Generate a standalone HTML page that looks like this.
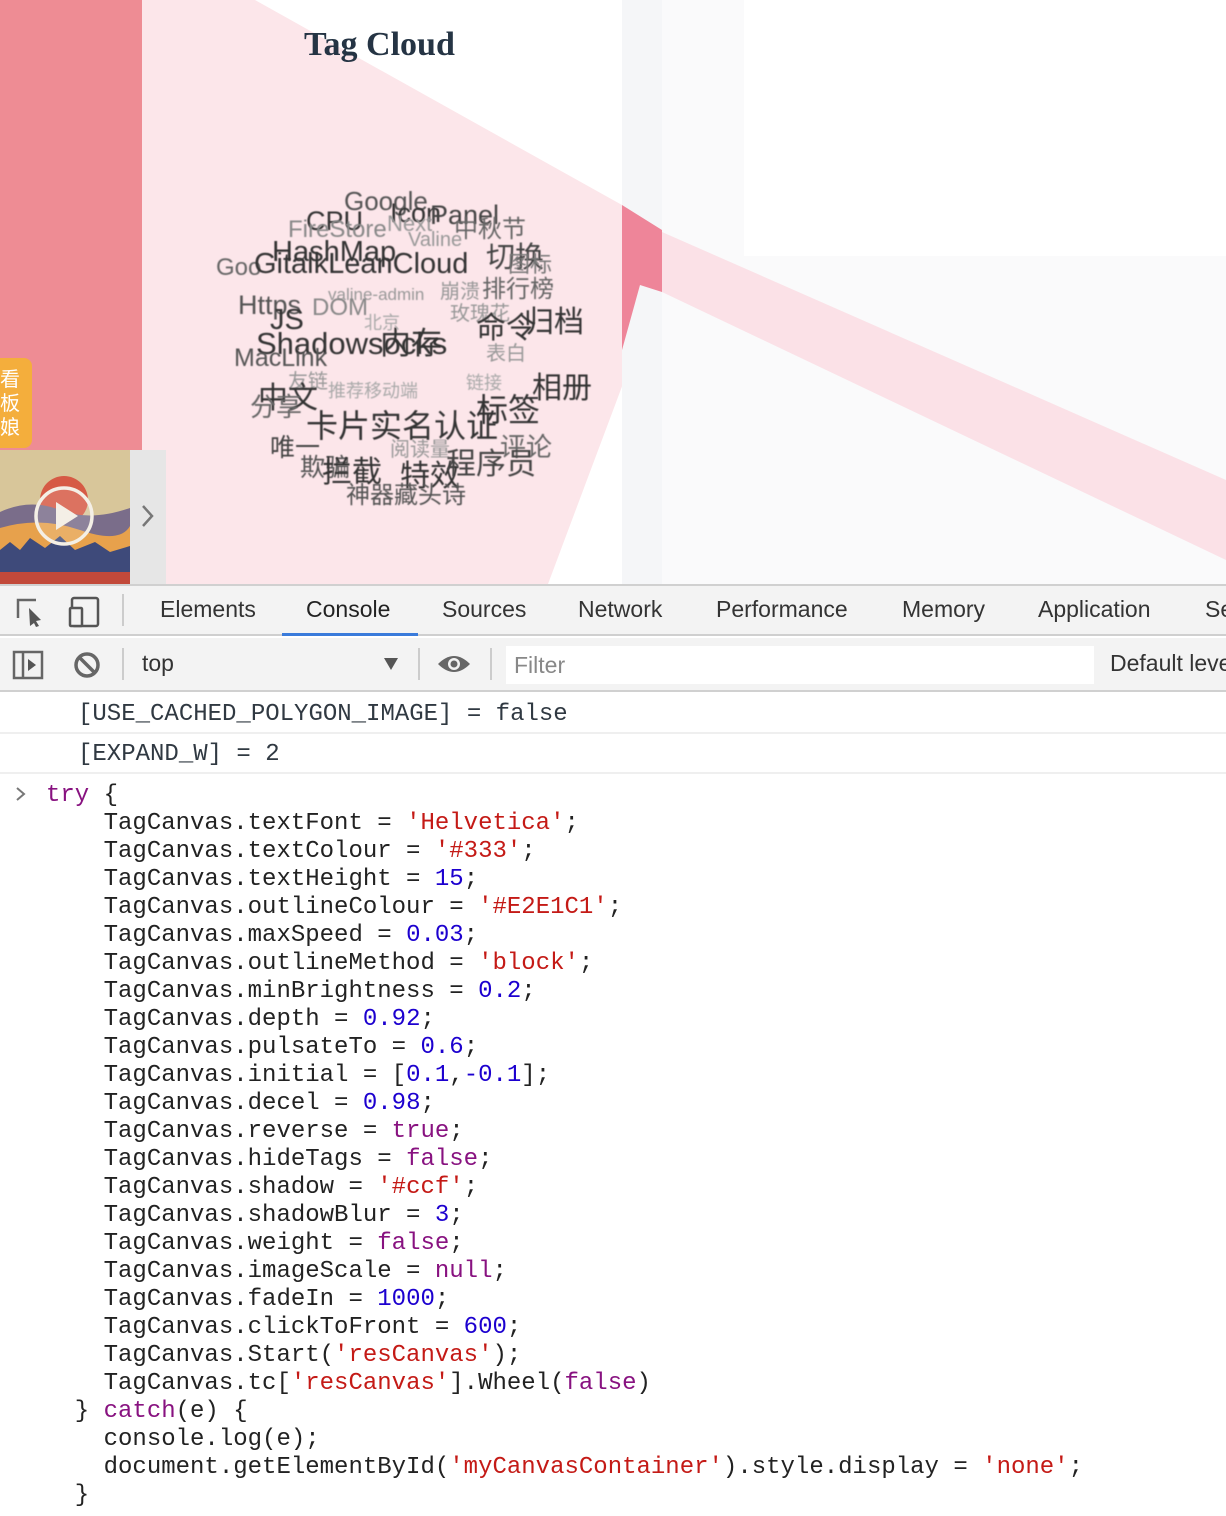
<!DOCTYPE html>
<html><head><meta charset="utf-8">
<style>
*{margin:0;padding:0;box-sizing:border-box}
body{width:1226px;height:1516px;overflow:hidden;background:#fff;position:relative;font-family:"Liberation Sans","Noto Sans CJK SC",sans-serif}
.abs{position:absolute;white-space:nowrap}
.tc span{position:absolute;white-space:nowrap;color:#333;filter:blur(0.6px);font-family:"Liberation Sans","Noto Sans CJK SC",sans-serif;line-height:1}
.tabs{top:584px;left:0;width:1226px;height:52px;background:#f3f3f3;border-top:2px solid #d0d0d0;border-bottom:2px solid #cfcfcf}
.tab{position:absolute;top:10px;font-size:23px;color:#333}
.bar2{top:638px;left:0;width:1226px;height:54px;background:#f3f3f3;border-bottom:2px solid #d0d0d0}
.mono{font-family:"Liberation Mono","DejaVu Sans Mono",monospace;font-size:24px;color:#222;white-space:pre}
.code{top:782px;left:46px;line-height:28px}
.k{color:#881280}.s{color:#c41a16}.n{color:#1c00cf}
</style></head><body>
<svg class="abs" style="left:0;top:0" width="1226" height="584">
<rect x="0" y="0" width="142" height="450" fill="#ee8c94"/>
<rect x="142" y="0" width="480" height="584" fill="#fff"/>
<polygon points="255,0 622,205 660,285 548,584 142,584 142,0" fill="#fce6ea"/>
<rect x="622" y="0" width="40" height="584" fill="#f5f6f8"/>
<rect x="662" y="0" width="564" height="584" fill="#fafafb"/>
<rect x="744" y="0" width="482" height="256" fill="#fff"/>
<polygon points="662,232 1226,480 1226,560 662,292" fill="#fbe1e7"/>
<polygon points="622,205 662,230 662,292 640,285 622,350" fill="#ee8599"/>
</svg>
<div class="abs" style="left:304px;top:26px;font-family:'Liberation Serif',serif;font-weight:bold;font-size:34px;color:#253444">Tag Cloud</div>
<div class="abs" style="left:0;top:358px;width:32px;height:90px;background:#f4ae3c;border-radius:0 8px 8px 0;color:#fff;font-size:20px;line-height:24px;padding-top:8px;white-space:normal;font-family:'Noto Sans CJK SC',sans-serif">看<br>板<br>娘</div>
<svg class="abs" style="left:0;top:450px" width="166" height="134">
<rect x="0" y="0" width="130" height="134" fill="#d8c69a"/>
<circle cx="64" cy="50" r="24" fill="#d65a45"/>
<path d="M0 62 Q30 48 60 60 T130 58 V134 H0Z" fill="#7a6d8a"/>
<path d="M0 78 Q40 66 80 80 T130 76 V134 H0Z" fill="#e7a14c"/>
<path d="M0 100 L10 92 L20 100 L30 88 L45 98 L60 86 L75 100 L95 92 L110 102 L130 96 V134 H0Z" fill="#3e4a7a"/>
<rect x="0" y="122" width="130" height="12" fill="#c2493a"/>
<circle cx="64" cy="66" r="28" fill="rgba(255,255,255,0.15)" stroke="#f4efe6" stroke-width="3.5"/>
<polygon points="56,52 56,80 78,66" fill="#f4efe6"/>
<rect x="130" y="0" width="36" height="134" fill="#e6e6e6"/>
<path d="M143 56 L152 66 L143 76" stroke="#777" stroke-width="2.5" fill="none"/>
</svg>
<div class="tc">
<span style="left:344px;top:188px;font-size:26px;color:#555">Google</span>
<span style="left:306px;top:208px;font-size:27px">CPU</span>
<span style="left:390px;top:200px;font-size:27px">Icon</span>
<span style="left:430px;top:202px;font-size:27px;color:#444">Panel</span>
<span style="left:288px;top:218px;font-size:24px;color:#888">FireStore</span>
<span style="left:387px;top:213px;font-size:22px;color:#999">Next</span>
<span style="left:408px;top:230px;font-size:20px;color:#999">Valine</span>
<span style="left:454px;top:218px;font-size:24px;color:#666">中秋节</span>
<span style="left:272px;top:238px;font-size:29px">HashMap</span>
<span style="left:216px;top:256px;font-size:24px;color:#666">Goo</span>
<span style="left:254px;top:250px;font-size:29px">GitalkLeanCloud</span>
<span style="left:486px;top:244px;font-size:29px;color:#444">切换</span>
<span style="left:508px;top:254px;font-size:22px;color:#777">图标</span>
<span style="left:328px;top:286px;font-size:17px;color:#999">valine-admin</span>
<span style="left:440px;top:282px;font-size:20px;color:#999">崩溃</span>
<span style="left:482px;top:278px;font-size:24px;color:#666">排行榜</span>
<span style="left:238px;top:292px;font-size:27px;color:#555">Https</span>
<span style="left:270px;top:306px;font-size:29px">JS</span>
<span style="left:312px;top:296px;font-size:24px;color:#888">DOM</span>
<span style="left:450px;top:304px;font-size:20px;color:#999">玫瑰花</span>
<span style="left:476px;top:314px;font-size:30px">命令</span>
<span style="left:524px;top:308px;font-size:30px">归档</span>
<span style="left:256px;top:328px;font-size:31px">Shadowsocks</span>
<span style="left:380px;top:328px;font-size:31px">内存</span>
<span style="left:364px;top:314px;font-size:18px;color:#aaa">北京</span>
<span style="left:234px;top:346px;font-size:25px;color:#555">MacLink</span>
<span style="left:486px;top:344px;font-size:20px;color:#999">表白</span>
<span style="left:288px;top:372px;font-size:20px;color:#999">友链</span>
<span style="left:328px;top:382px;font-size:18px;color:#aaa">推荐移动端</span>
<span style="left:466px;top:374px;font-size:18px;color:#aaa">链接</span>
<span style="left:532px;top:374px;font-size:30px">相册</span>
<span style="left:258px;top:384px;font-size:30px">中文</span>
<span style="left:250px;top:394px;font-size:26px;color:#666">分享</span>
<span style="left:476px;top:394px;font-size:32px">标签</span>
<span style="left:306px;top:410px;font-size:32px">卡片实名认证</span>
<span style="left:270px;top:436px;font-size:25px;color:#444">唯一</span>
<span style="left:390px;top:440px;font-size:20px;color:#999">阅读量</span>
<span style="left:500px;top:434px;font-size:26px;color:#666">评论</span>
<span style="left:300px;top:456px;font-size:25px;color:#555">欺骗</span>
<span style="left:322px;top:458px;font-size:30px">拦截</span>
<span style="left:400px;top:462px;font-size:30px">特效</span>
<span style="left:446px;top:450px;font-size:30px;color:#444">程序员</span>
<span style="left:346px;top:484px;font-size:24px;color:#555">神器藏头诗</span>
</div>
<div class="abs tabs">
<svg class="abs" style="left:14px;top:10px" width="90" height="32"><path d="M4 22 V4 H22" stroke="#666" stroke-width="2.5" fill="none"/><path d="M15 12 L27 24 L22 25 L25 30 L22 31 L20 27 L16 30Z" fill="#555"/><rect x="58" y="2" width="26" height="28" rx="2" stroke="#555" stroke-width="2.5" fill="none"/><rect x="56" y="12" width="12" height="18" rx="1" fill="#f3f3f3" stroke="#555" stroke-width="2.5"/></svg>
<div class="abs" style="left:122px;top:8px;width:2px;height:32px;background:#ccc"></div>
<span class="tab" style="left:160px">Elements</span>
<span class="tab" style="left:306px;color:#222">Console</span>
<div class="abs" style="left:282px;top:47px;width:136px;height:3px;background:#3a7bdb"></div>
<span class="tab" style="left:442px">Sources</span>
<span class="tab" style="left:578px">Network</span>
<span class="tab" style="left:716px">Performance</span>
<span class="tab" style="left:902px">Memory</span>
<span class="tab" style="left:1038px">Application</span>
<span class="tab" style="left:1205px">Se</span>
</div>
<div class="abs bar2">
<svg class="abs" style="left:12px;top:12px" width="90" height="30"><rect x="2" y="2" width="28" height="26" stroke="#666" stroke-width="2.5" fill="none"/><line x1="11" y1="2" x2="11" y2="28" stroke="#666" stroke-width="2.5"/><polygon points="16,9 16,21 24,15" fill="#555"/><circle cx="75" cy="15" r="11" stroke="#666" stroke-width="3.5" fill="none"/><line x1="67" y1="7" x2="83" y2="23" stroke="#666" stroke-width="3.5"/></svg>
<div class="abs" style="left:122px;top:10px;width:2px;height:32px;background:#ccc"></div>
<span class="abs" style="left:142px;top:12px;font-size:23px;color:#333">top</span>
<svg class="abs" style="left:384px;top:20px" width="14" height="12"><polygon points="0,0 14,0 7,12" fill="#555"/></svg>
<div class="abs" style="left:418px;top:10px;width:2px;height:32px;background:#ccc"></div>
<svg class="abs" style="left:436px;top:14px" width="36" height="24"><path d="M2 12 Q18 -4 34 12 Q18 28 2 12Z" fill="#666"/><circle cx="18" cy="12" r="6" fill="#f3f3f3"/><circle cx="18" cy="12" r="3.5" fill="#666"/></svg>
<div class="abs" style="left:490px;top:10px;width:2px;height:32px;background:#ccc"></div>
<div class="abs" style="left:506px;top:8px;width:588px;height:38px;background:#fff"></div>
<span class="abs" style="left:514px;top:14px;font-size:23px;color:#888">Filter</span>
<span class="abs" style="left:1110px;top:12px;font-size:23px;color:#333">Default leve</span>
</div>
<div class="abs mono" style="left:78px;top:701px;color:#303942">[USE_CACHED_POLYGON_IMAGE] = false</div>
<div class="abs" style="left:0;top:732px;width:1226px;height:2px;background:#efefef"></div>
<div class="abs mono" style="left:78px;top:741px;color:#303942">[EXPAND_W] = 2</div>
<div class="abs" style="left:0;top:772px;width:1226px;height:2px;background:#efefef"></div>
<svg class="abs" style="left:14px;top:786px" width="14" height="16"><path d="M3 2 L10 8 L3 14" stroke="#777" stroke-width="2" fill="none"/></svg>
<div class="abs mono code"><span class="k">try</span> {
    TagCanvas.textFont = <span class="s">'Helvetica'</span>;
    TagCanvas.textColour = <span class="s">'#333'</span>;
    TagCanvas.textHeight = <span class="n">15</span>;
    TagCanvas.outlineColour = <span class="s">'#E2E1C1'</span>;
    TagCanvas.maxSpeed = <span class="n">0.03</span>;
    TagCanvas.outlineMethod = <span class="s">'block'</span>;
    TagCanvas.minBrightness = <span class="n">0.2</span>;
    TagCanvas.depth = <span class="n">0.92</span>;
    TagCanvas.pulsateTo = <span class="n">0.6</span>;
    TagCanvas.initial = [<span class="n">0.1</span>,<span class="n">-0.1</span>];
    TagCanvas.decel = <span class="n">0.98</span>;
    TagCanvas.reverse = <span class="k">true</span>;
    TagCanvas.hideTags = <span class="k">false</span>;
    TagCanvas.shadow = <span class="s">'#ccf'</span>;
    TagCanvas.shadowBlur = <span class="n">3</span>;
    TagCanvas.weight = <span class="k">false</span>;
    TagCanvas.imageScale = <span class="k">null</span>;
    TagCanvas.fadeIn = <span class="n">1000</span>;
    TagCanvas.clickToFront = <span class="n">600</span>;
    TagCanvas.Start(<span class="s">'resCanvas'</span>);
    TagCanvas.tc[<span class="s">'resCanvas'</span>].Wheel(<span class="k">false</span>)
  } <span class="k">catch</span>(e) {
    console.log(e);
    document.getElementById(<span class="s">'myCanvasContainer'</span>).style.display = <span class="s">'none'</span>;
  }</div>
</body></html>
